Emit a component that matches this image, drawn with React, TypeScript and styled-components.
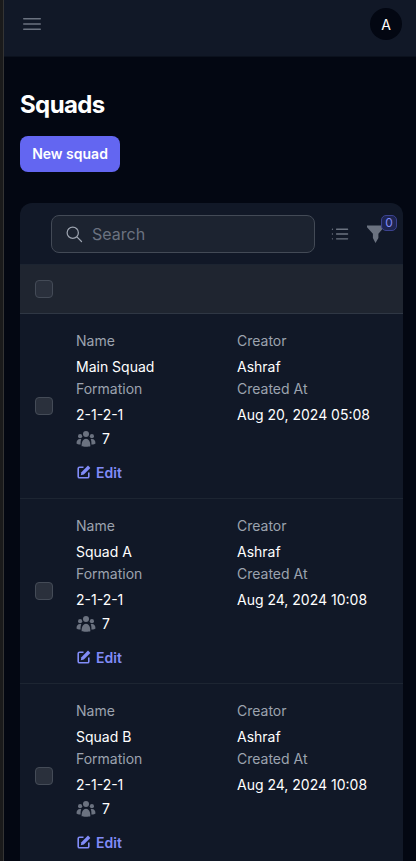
import React, { FC } from "react";
import styled, { createGlobalStyle } from "styled-components";

type Squad = {
  name: string;
  createdAt: string;
};

const squads: Squad[] = [
  { name: "Main Squad", createdAt: "Aug 20, 2024 05:08" },
  { name: "Squad A", createdAt: "Aug 24, 2024 10:08" },
  { name: "Squad B", createdAt: "Aug 24, 2024 10:08" }
];

const GlobalStyle = createGlobalStyle`
  html, body {
    margin: 0;
    padding: 0;
    height: 861px;
    overflow: hidden;
    background: #1a1a1b;
    font-family: Inter, "Liberation Sans", sans-serif;
  }
  * {
    box-sizing: border-box;
  }
`;

const Shell = styled.div`
  height: 861px;
  margin-left: 3px;
  overflow: hidden;
  background: #030712;
  border-left: 1px solid #343434;
`;

const TopBar = styled.header`
  height: 57px;
  padding: 8px 14px 0 16px;
  display: flex;
  align-items: flex-start;
  justify-content: space-between;
  background: #111827;
  border-bottom: 1px solid #0b111d;
`;

const MenuIcon = styled.svg`
  width: 24px;
  height: 24px;
  margin-top: 4px;
  color: #6b7280;
`;

const Avatar = styled.div`
  width: 32px;
  height: 32px;
  border-radius: 50%;
  background: #030712;
  color: #fff;
  font-size: 14px;
  display: flex;
  align-items: center;
  justify-content: center;
`;

const Main = styled.main`
  padding: 32px 13px 0 16px;
`;

const Title = styled.h1`
  margin: 0;
  font-size: 24px;
  line-height: 32px;
  font-weight: 700;
  letter-spacing: -0.6px;
  color: #fff;
`;

const PrimaryButton = styled.button`
  display: block;
  margin-top: 15px;
  width: 100px;
  height: 36px;
  padding: 0;
  border: 0;
  border-radius: 8px;
  background: #6366f1;
  color: #fff;
  font: 600 14px/20px Inter, sans-serif;
`;

const Card = styled.section`
  margin-top: 31px;
  border-radius: 12px 12px 0 0;
  background: #111827;
  overflow: hidden;
`;

const Toolbar = styled.div`
  height: 61px;
  padding: 0 0 0 31px;
  display: flex;
  align-items: center;
`;

const SearchBox = styled.div`
  flex: 0 0 264px;
  height: 38px;
  padding: 0 12px;
  display: flex;
  align-items: center;
  gap: 8px;
  background: #1c2330;
  border: 1px solid #434a56;
  border-radius: 8px;
`;

const SearchIcon = styled.svg`
  width: 20px;
  height: 20px;
  color: #9ca3af;
  flex: none;
`;

const Placeholder = styled.span`
  color: #6b7280;
  font-size: 16px;
`;

const ListIcon = styled.svg`
  width: 22px;
  height: 22px;
  margin-left: 14px;
  color: #6b7280;
  flex: none;
`;

const FilterButton = styled.div`
  position: relative;
  width: 17px;
  height: 18px;
  margin: 1px 0 0 16px;
  flex: none;
`;

const FilterIcon = styled.svg`
  width: 17px;
  height: 18px;
  color: #6b7280;
  display: block;
`;

const Badge = styled.span`
  position: absolute;
  top: -10px;
  left: 14px;
  width: 16px;
  height: 16px;
  border-radius: 5px;
  background: #1e2550;
  border: 1px solid #3c4390;
  color: #818cf8;
  font-size: 12px;
  line-height: 14px;
  text-align: center;
`;

const HeaderRow = styled.div`
  height: 50px;
  padding-left: 15px;
  display: flex;
  align-items: center;
  background: #1f2530;
  border-top: 1px solid #1c2431;
  border-bottom: 1px solid #2f3744;
`;

const Check = styled.span`
  display: block;
  width: 18px;
  height: 18px;
  border-radius: 4px;
  background: #2a303c;
  border: 1px solid #444b57;
  flex: none;
`;

const Row = styled.article`
  height: 185px;
  padding-left: 15px;
  display: flex;
  border-bottom: 1px solid #1d2532;
`;

const CheckCell = styled.div`
  width: 41px;
  height: 184px;
  display: flex;
  align-items: center;
  flex: none;
`;

const Fields = styled.div`
  width: 161px;
  padding-top: 17px;
  flex: none;
`;

const Field = styled.div`
  margin-bottom: 2px;
`;

const Label = styled.div`
  line-height: 20px;
  margin-bottom: 6px;
  font-size: 14px;
  color: #9ca3af;
`;

const Value = styled.div`
  line-height: 20px;
  font-size: 14px;
  color: #fff;
`;

const Count = styled(Value)`
  margin-top: 4px;
  display: flex;
  align-items: center;
  gap: 6px;
`;

const UsersIcon = styled.svg`
  width: 20px;
  height: 16px;
  color: #6b7280;
  flex: none;
`;

const EditLink = styled.a`
  margin-top: 13px;
  height: 20px;
  display: flex;
  align-items: center;
  gap: 5px;
  padding-left: 1px;
  color: #818cf8;
  font-size: 14px;
  font-weight: 600;
`;

const EditIcon = styled.svg`
  width: 14px;
  height: 14px;
  flex: none;
`;

const SquadRow: FC<{ squad: Squad }> = ({ squad }) => (
  <Row>
    <CheckCell>
      <Check />
    </CheckCell>
    <Fields>
      <Field>
        <Label>Name</Label>
        <Value>{squad.name}</Value>
      </Field>
      <Field>
        <Label>Formation</Label>
        <Value>2-1-2-1</Value>
      </Field>
      <Count>
        <UsersIcon viewBox="0 0 20 16" fill="currentColor">
          <circle cx="10" cy="3.1" r="3" />
          <circle cx="4.1" cy="5.2" r="2.1" />
          <circle cx="15.9" cy="5.2" r="2.1" />
          <path d="M5.6 15.2c0-4.6 1.7-7.4 4.4-7.4s4.4 2.8 4.4 7.4c-1.3.6-7.5.6-8.8 0z" />
          <path d="M4.6 13.4c-2.2 0-3.8-.5-4.1-1 0-2.6 1.3-4.4 3.4-4.4.5 0 1 .1 1.4.3-.6 1.3-.8 3.1-.7 5.1z" />
          <path d="M15.4 13.4c2.2 0 3.8-.5 4.1-1 0-2.6-1.3-4.4-3.4-4.4-.5 0-1 .1-1.4.3.6 1.3.8 3.1.7 5.1z" />
        </UsersIcon>
        7
      </Count>
      <EditLink>
        <EditIcon viewBox="0 0 14 14">
          <path
            d="M6.5 2.2H2.6c-.8 0-1.4.6-1.4 1.4v7.8c0 .8.6 1.4 1.4 1.4h7.8c.8 0 1.4-.6 1.4-1.4V7.5"
            fill="none"
            stroke="currentColor"
            strokeWidth="1.6"
          />
          <path d="M11 .6l2.4 2.4-6.6 6.6-3 .6.6-3z" fill="currentColor" />
        </EditIcon>
        Edit
      </EditLink>
    </Fields>
    <Fields>
      <Field>
        <Label>Creator</Label>
        <Value>Ashraf</Value>
      </Field>
      <Field>
        <Label>Created At</Label>
        <Value>{squad.createdAt}</Value>
      </Field>
    </Fields>
  </Row>
);

const App: FC = () => (
  <>
    <GlobalStyle />
    <Shell>
      <TopBar>
        <MenuIcon viewBox="0 0 24 24" fill="none" stroke="currentColor" strokeWidth="1.5" strokeLinecap="round">
          <path d="M3.75 6.75h16.5M3.75 12h16.5M3.75 17.25h16.5" />
        </MenuIcon>
        <Avatar>A</Avatar>
      </TopBar>
      <Main>
        <Title>Squads</Title>
        <PrimaryButton>New squad</PrimaryButton>
        <Card>
          <Toolbar>
            <SearchBox>
              <SearchIcon viewBox="0 0 24 24" fill="none" stroke="currentColor" strokeWidth="1.5" strokeLinecap="round">
                <path d="M21 21l-5.2-5.2M17.25 10.5a6.75 6.75 0 1 1-13.5 0 6.75 6.75 0 0 1 13.5 0z" />
              </SearchIcon>
              <Placeholder>Search</Placeholder>
            </SearchBox>
            <ListIcon viewBox="0 0 24 24" fill="none" stroke="currentColor" strokeWidth="1.5" strokeLinecap="round">
              <path d="M8.25 6.75h12M8.25 12h12M8.25 17.25h12M3.75 6.75h.01M3.75 12h.01M3.75 17.25h.01" />
            </ListIcon>
            <FilterButton>
              <FilterIcon viewBox="0 0 17 18" fill="currentColor">
                <path d="M0 .5h17v1.8l-5.6 6.4v4.4L8.5 18l-2.6-5V8.7L0 2.3z" />
              </FilterIcon>
              <Badge>0</Badge>
            </FilterButton>
          </Toolbar>
          <HeaderRow>
            <Check />
          </HeaderRow>
          {squads.map(squad => (
            <SquadRow key={squad.name} squad={squad} />
          ))}
        </Card>
      </Main>
    </Shell>
  </>
);

export default App;
